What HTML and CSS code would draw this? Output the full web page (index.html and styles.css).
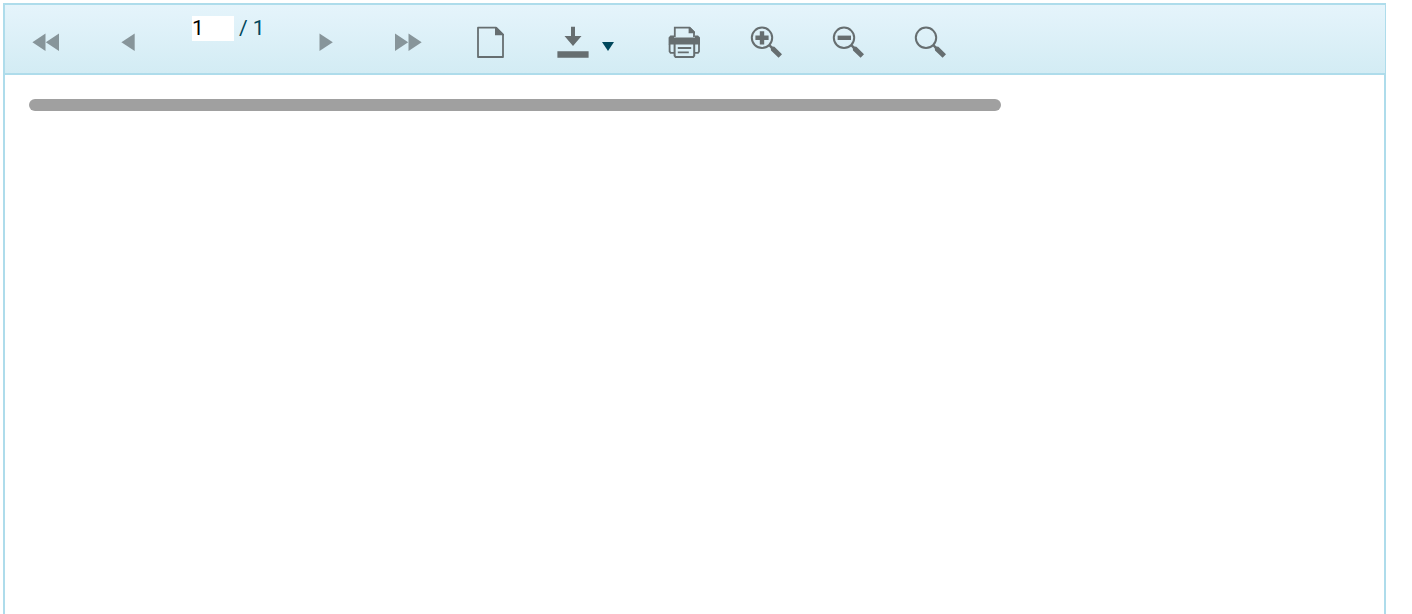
FILE: index.html
```html
<!DOCTYPE html>
<html lang="en">
<head>
<meta charset="UTF-8" />
<meta name="viewport" content="width=device-width, initial-scale=1" />
<title>Report Viewer</title>
<link rel="stylesheet" href="styles.css">
</head>
<body>

<div class="viewer">
  <div class="toolbar" role="toolbar" aria-label="Report toolbar">
    <button class="tool nav" type="button" aria-label="First page">
      <svg class="icon" viewBox="0 0 32 32"><path d="M2.4 16.2L15.5 7.4V25zM15.8 16.2L29 7.4V25z"/></svg>
    </button>
    <button class="tool nav" type="button" aria-label="Previous page">
      <svg class="icon" viewBox="0 0 32 32"><path d="M9.4 16.2L22.7 7.4V25z"/></svg>
    </button>

    <div class="pager">
      <input class="page" type="text" value="1" aria-label="Page number">
      <span class="total">/ 1</span>
    </div>

    <button class="tool nav" type="button" aria-label="Next page">
      <svg class="icon" viewBox="0 0 32 32"><path d="M22.8 16.2L9.5 7.4V25z"/></svg>
    </button>
    <button class="tool nav" type="button" aria-label="Last page">
      <svg class="icon" viewBox="0 0 32 32"><path d="M16.2 16.2L3 7.4V25zM29.7 16.2L16.5 7.4V25z"/></svg>
    </button>

    <button class="tool" type="button" aria-label="Page view">
      <svg class="icon" viewBox="0 0 32 32">
        <path d="M4 1.7H22L29 8.6V31H4z" fill="none" stroke="currentColor" stroke-width="1.8" stroke-linejoin="round"/>
        <path d="M21 1H22.5L30 8.5V9.3H21z"/>
      </svg>
    </button>
    <button class="tool export" type="button" aria-label="Export">
      <svg class="icon" viewBox="0 0 32 32"><path d="M14 .8H18V10H24.5L16 20L7.5 10H14zM.4 25.2H31.6V31.8H.4z"/></svg>
      <svg class="caret" viewBox="0 0 12 9"><path d="M0 0H12L6 9z"/></svg>
    </button>
    <button class="tool" type="button" aria-label="Print">
      <svg class="icon" viewBox="0 0 32 32">
        <path d="M6.8 11V1.7H21.5L26 6.2V11" fill="none" stroke="currentColor" stroke-width="1.8"/>
        <path d="M20.6 1H22L27 6V7.2H20.6z"/>
        <path d="M2.4 9.4H6V11.6H27V9.4H30L32 11.4V18.6H.6V11.4z"/>
        <path d="M1.6 18V25.4L2.6 26.8H6.4M26.4 26.8H30L31 25.4V18" fill="none" stroke="currentColor" stroke-width="1.8"/>
        <path d="M6.6 18V29.6L7.6 31H25.2L26.2 29.6V18" fill="none" stroke="currentColor" stroke-width="2"/>
        <path d="M9.8 21H23.2V22.9H9.8zM9.8 25.4H20.8V27.3H9.8z"/>
      </svg>
    </button>
    <button class="tool" type="button" aria-label="Zoom in">
      <svg class="icon" viewBox="0 0 32 32">
        <circle cx="12" cy="11.8" r="10.2" fill="none" stroke="currentColor" stroke-width="2"/>
        <path d="M18.6 20L20.2 18.4L22.6 20.6L24.4 20.8L32 28.2L28.6 31.8L21 24.4L20.8 22.4z"/>
        <path d="M9.8 5.2H14.2V9.6H18.6V14H14.2V18.4H9.8V14H5.4V9.6H9.8z"/>
      </svg>
    </button>
    <button class="tool" type="button" aria-label="Zoom out">
      <svg class="icon" viewBox="0 0 32 32">
        <circle cx="12" cy="11.8" r="10.2" fill="none" stroke="currentColor" stroke-width="2"/>
        <path d="M18.6 20L20.2 18.4L22.6 20.6L24.4 20.8L32 28.2L28.6 31.8L21 24.4L20.8 22.4z"/>
        <path d="M5.6 9.6H19V14H5.6z"/>
      </svg>
    </button>
    <button class="tool" type="button" aria-label="Search">
      <svg class="icon" viewBox="0 0 32 32">
        <circle cx="12" cy="11.8" r="10.2" fill="none" stroke="currentColor" stroke-width="2"/>
        <path d="M18.6 20L20.2 18.4L22.6 20.6L24.4 20.8L32 28.2L28.6 31.8L21 24.4L20.8 22.4z"/>
      </svg>
    </button>
  </div>

  <div class="content">
    <div class="bar"></div>
  </div>
</div>

</body>
</html>
```
FILE: styles.css
```css
* {
  box-sizing: border-box;
}

body {
  margin: 0;
  background: #fff;
  font-family: Roboto, "Liberation Sans", Arial, sans-serif;
  font-size: 21px;
}

.viewer {
  display: flex;
  flex-direction: column;
  min-height: 100vh;
  padding: 3px 26px 0 3px;
}

.toolbar {
  display: flex;
  align-items: stretch;
  border: 2px solid #aedceb;
  border-right-width: 1px;
  background: linear-gradient(#e5f4fb, #d3ecf4);
}

.tool {
  display: flex;
  justify-content: center;
  align-items: center;
  width: 82px;
  padding: 21px 0 15px;
  border: none;
  background: none;
  color: #666e70;
  cursor: pointer;
}

.nav {
  color: #87959a;
}

.icon {
  width: 32px;
  height: 32px;
  fill: currentColor;
}

/* icon plus dropdown arrow */
.export {
  justify-content: flex-start;
  gap: 13px;
  width: 112px;
  padding-left: 26px;
}

.caret {
  width: 12px;
  height: 9px;
  margin-top: 9px;
  fill: #00475c;
}

.pager {
  display: flex;
  align-items: flex-start;
  gap: 5px;
  width: 116px;
  padding: 11px 0 0 23px;
  color: #00475c;
  line-height: 25px;
}

.page {
  width: 42px;
  height: 25px;
  padding: 0;
  border: none;
  background: #fff;
  color: #000;
  font: inherit;
}

.content {
  flex: 1;
  padding: 24px;
  border: solid #aedceb;
  border-width: 0 2px;
}

.bar {
  width: 73%;
  height: 12px;
  border-radius: 6px;
  background: #a0a0a0;
}
```
